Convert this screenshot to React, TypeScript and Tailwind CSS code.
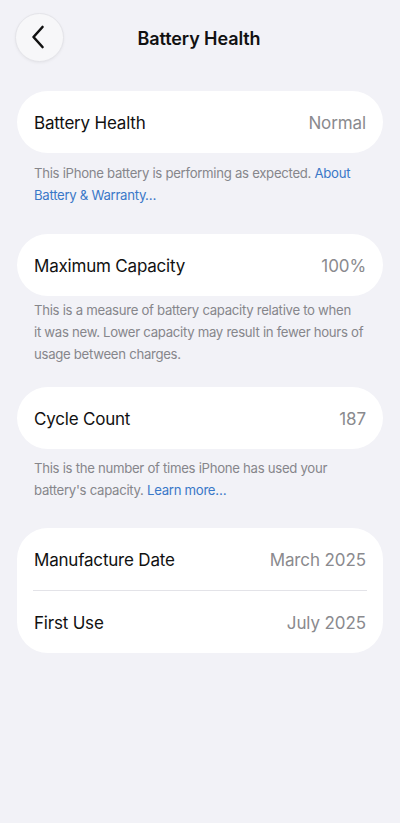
import React from "react";

const Row = ({ label, value }: { label: string; value: string }) => (
  <div className="flex h-[62px] items-center justify-between px-[17px] pt-[3px]">
    <span className="text-[17px] tracking-[-0.2px] text-[#111]">{label}</span>
    <span className="text-[17px] tracking-[-0.1px] text-[#8a8a8e]">{value}</span>
  </div>
);

const Card = ({ children, className = "" }: { children: React.ReactNode; className?: string }) => (
  <div className={`bg-white rounded-[31px] overflow-hidden ${className}`}>{children}</div>
);

const Note = ({ children, className = "" }: { children: React.ReactNode; className?: string }) => (
  <p className={`px-[17px] text-[13.2px] tracking-[-0.3px] leading-[22px] text-[#86868b] ${className}`}>{children}</p>
);

export default function App() {
  return (
    <div
      className="min-h-[823px] w-full bg-[#f2f2f7] px-[17px] pt-[13px]"
      style={{ fontFamily: "Inter, 'Noto Sans', sans-serif" }}
    >
      <div className="grid grid-cols-[49px_1fr_49px] items-center h-[49px] -ml-[2px]">
        <button className="flex h-[49px] w-[49px] items-center justify-center rounded-full border border-[#e4e4e9] bg-[#f7f7f9] shadow-[0_1px_3px_rgba(0,0,0,0.05)]">
          <svg width="14" height="24" viewBox="0 0 14 24" fill="none" className="-ml-[3px] -mt-[2px]">
            <path d="M11.5 2L2.5 12l9 10" stroke="#111" strokeWidth="2.6" strokeLinecap="round" strokeLinejoin="round" />
          </svg>
        </button>
        <h1 className="text-center text-[18px] font-semibold tracking-[-0.1px] text-[#111] pt-[2px]">Battery Health</h1>
        <div />
      </div>

      <Card className="mt-[29px]">
        <Row label="Battery Health" value="Normal" />
      </Card>
      <Note className="mt-[9px]">
        This iPhone battery is performing as expected.{" "}
        <span className="text-[#3a78c8]">About Battery &amp; Warranty…</span>
      </Note>

      <Card className="mt-[28px]">
        <Row label="Maximum Capacity" value="100%" />
      </Card>
      <Note className="mt-[3px]">
        This is a measure of battery capacity relative to when
        <br />
        it was new. Lower capacity may result in fewer hours of usage between charges.
      </Note>

      <Card className="mt-[22px]">
        <Row label="Cycle Count" value="187" />
      </Card>
      <Note className="mt-[8px]">
        This is the number of times iPhone has used your battery's capacity.{" "}
        <span className="text-[#3a78c8]">Learn more…</span>
      </Note>

      <Card className="mt-[27px] rounded-[30px]">
        <Row label="Manufacture Date" value="March 2025" />
        <div className="mx-[16px] h-px bg-[#e3e3e8]" />
        <Row label="First Use" value="July 2025" />
      </Card>
    </div>
  );
}
